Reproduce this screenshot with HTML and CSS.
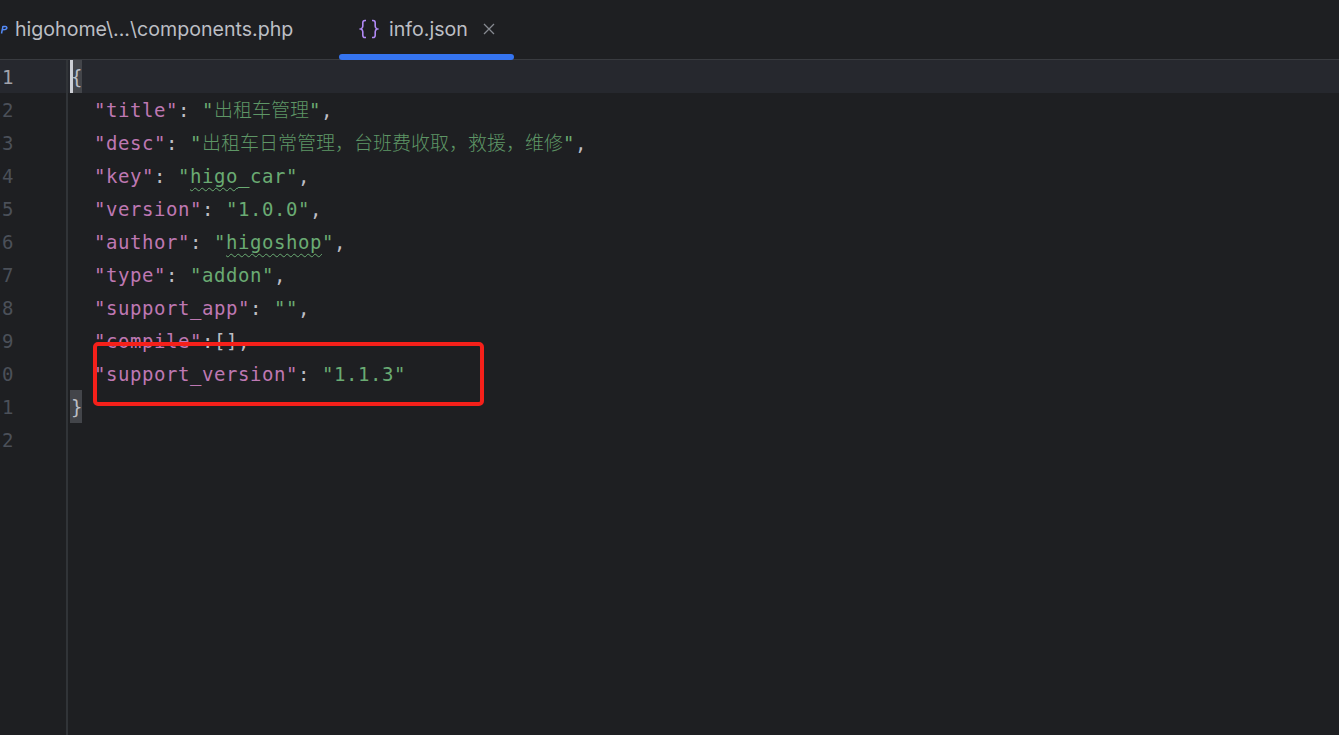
FILE: index.html
```html
<!DOCTYPE html>
<html lang="zh">
<head>
<meta charset="utf-8">
<title>info.json</title>
<link rel="stylesheet" href="styles.css">
</head>
<body>
<div class="app">
  <header class="tabs">
    <div class="tab tab-php">
      <svg class="php-icon" width="8" height="12" viewBox="0 0 8 12"><path d="M1.5 10.5L3 3.2M2.8 3.4H5.6C7 3.4 7.2 5 6.3 5.9C5.7 6.6 4.5 6.7 2.2 6.7" fill="none" stroke="#548af7" stroke-width="1.5"/></svg>
      <span class="tab-label">higohome\...\components.php</span>
    </div>
    <div class="tab tab-active">
      <svg class="json-icon" width="20" height="20" viewBox="0 0 20 20"><path d="M7 1.5H6C4.5 1.5 3.8 2.3 3.8 3.8V7.2C3.8 8.7 3 9.6 1.8 10C3 10.4 3.8 11.3 3.8 12.8V16.2C3.8 17.7 4.5 18.5 6 18.5H7M13 1.5H14C15.5 1.5 16.2 2.3 16.2 3.8V7.2C16.2 8.7 17 9.6 18.2 10C17 10.4 16.2 11.3 16.2 12.8V16.2C16.2 17.7 15.5 18.5 14 18.5H13" fill="none" stroke="#b189f5" stroke-width="1.6"/></svg>
      <span class="tab-label">info.json</span>
      <svg class="close" width="12" height="12" viewBox="0 0 12 12"><path d="M1 1L11 11M11 1L1 11" stroke="#868a91" stroke-width="1.3" fill="none"/></svg>
    </div>
  </header>
  <main class="editor">
    <div class="row current"><span class="num num-cur">1</span><code class="code"><span class="brace"><i class="caret"></i>{</span></code></div>
    <div class="row"><span class="num">2</span><code class="code in"><span class="k">"title"</span><span class="p">: </span><span class="s">"<span class="cjk">出租车管理</span>"</span><span class="p">,</span></code></div>
    <div class="row"><span class="num">3</span><code class="code in"><span class="k">"desc"</span><span class="p">: </span><span class="s">"<span class="cjk">出租车日常管理，台班费收取，救援，维修</span>"</span><span class="p">,</span></code></div>
    <div class="row"><span class="num">4</span><code class="code in"><span class="k">"key"</span><span class="p">: </span><span class="s">"<span class="typo">higo</span>_car"</span><span class="p">,</span></code></div>
    <div class="row"><span class="num">5</span><code class="code in"><span class="k">"version"</span><span class="p">: </span><span class="s">"1.0.0"</span><span class="p">,</span></code></div>
    <div class="row"><span class="num">6</span><code class="code in"><span class="k">"author"</span><span class="p">: </span><span class="s">"<span class="typo">higoshop</span>"</span><span class="p">,</span></code></div>
    <div class="row"><span class="num">7</span><code class="code in"><span class="k">"type"</span><span class="p">: </span><span class="s">"addon"</span><span class="p">,</span></code></div>
    <div class="row"><span class="num">8</span><code class="code in"><span class="k">"support_app"</span><span class="p">: </span><span class="s">""</span><span class="p">,</span></code></div>
    <div class="row"><span class="num">9</span><code class="code in"><span class="k">"compile"</span><span class="p">:[],</span></code></div>
    <div class="row"><span class="num">0</span><code class="code in"><span class="k">"support_version"</span><span class="p">: </span><span class="s">"1.1.3"</span></code></div>
    <div class="row"><span class="num">1</span><code class="code"><span class="brace">}</span></code></div>
    <div class="row"><span class="num">2</span><code class="code"></code></div>
    <div class="annotation"></div>
  </main>
</div>
</body>
</html>
```

FILE: styles.css
```css
* { box-sizing: border-box; }
html, body { margin: 0; height: 100%; overflow: hidden; background: #1e1f22; }
.app { display: flex; flex-direction: column; height: 735px; width: 1339px; }

.tabs {
  display: flex;
  height: 60px;
  flex: none;
  border-bottom: 1px solid #393b40;
  font-family: Inter, "Liberation Sans", sans-serif;
  font-size: 19.6px;
  color: #bcbec4;
}
.tab { display: flex; align-items: center; height: 60px; padding-bottom: 2px; }
.tab-php { width: 339px; }
.php-icon { flex: none; margin-right: 7px; }
.tab-active { position: relative; width: 175px; padding-left: 20px; }
.tab-active::after {
  content: "";
  position: absolute;
  left: 0; right: 0; bottom: 0;
  height: 6px;
  background: #3574f0;
  border-radius: 3px;
}
.json-icon { flex: none; margin-right: 10px; }
.tab-label { white-space: nowrap; }
.close { margin-left: 15px; flex: none; }

.editor { position: relative; flex: 1; background: #1e1f22; }
.editor::before {
  content: "";
  position: absolute;
  left: 66px; top: 0; bottom: 0;
  width: 2px;
  background: #313438;
}
.row { display: flex; height: 33px; align-items: flex-start; font-family: "DejaVu Sans Mono", monospace; font-size: 19px; line-height: 35px; letter-spacing: 0.56px; white-space: pre; }
.current { background: #26282e; }
.num { width: 70px; flex: none; padding-left: 2px; color: #4b5059; }
.num-cur { color: #a1a3ab; }
.code { font: inherit; color: #bcbec4; display: block; }
.in { padding-left: 24px; }
.brace { display: inline-block; position: relative; background: #43454a; height: 33px; width: 12px; padding-left: 1px; }
.caret { position: absolute; left: 0; top: 0; width: 3px; height: 33px; background: #ced0d6; }
.k { color: #c77dbb; opacity: .95; }
.s { color: #6aab73; }
.p { color: #bcbec4; }
.cjk { font-family: "Noto Sans CJK SC", sans-serif; font-size: 19px; line-height: 1; letter-spacing: 0; font-weight: 300; opacity: .85; }
.typo { text-decoration: underline wavy #6aab73 1px; text-underline-offset: 4px; }

.annotation {
  position: absolute;
  left: 93px; top: 282px;
  width: 391px; height: 64px;
  border: 4px solid #f5201a;
  border-radius: 5px;
}
```
